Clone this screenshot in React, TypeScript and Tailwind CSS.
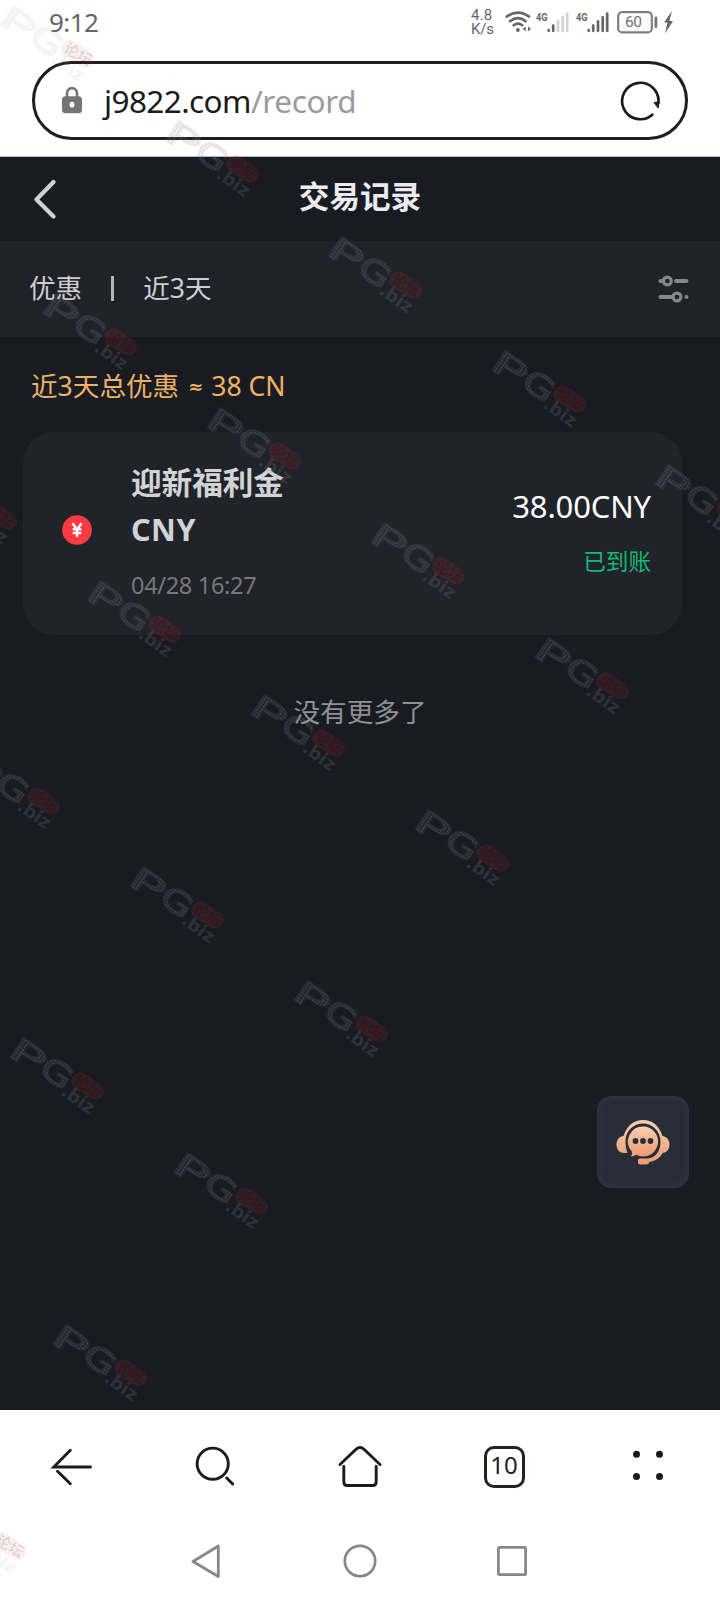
import React from "react";

const MARKS: [number, number][] = [
  [0, 5], [165, 120], [328, 236], [492, 350], [655, 464],
  [43, 293], [207, 407], [371, 522], [535, 637],
  [-77, 467], [87, 580], [251, 694], [415, 809],
  [-34, 752], [130, 866], [294, 980],
  [10, 1037], [174, 1152], [53, 1324], [-68, 1497],
];

function Watermarks() {
  return (
    <svg className="pointer-events-none absolute inset-0" width="720" height="1600" viewBox="0 0 720 1600">
      <defs>
        <pattern id="mesh" width="3" height="3" patternUnits="userSpaceOnUse">
          <rect width="3" height="3" fill="#7e838c" fillOpacity="0.08" />
          <rect width="2" height="2" fill="#9298a2" fillOpacity="0.11" />
        </pattern>
        <g id="mark">
          <g transform="translate(1 18) rotate(34)" fontFamily="DejaVu Sans" fontWeight="400">
            <text x="-4" y="2" fontSize="32" textLength="36" lengthAdjust="spacingAndGlyphs" fill="url(#mesh)" stroke="url(#mesh)" strokeWidth="2">P</text>
            <text x="32" y="0" fontSize="31" textLength="32" lengthAdjust="spacingAndGlyphs" fill="url(#mesh)" stroke="url(#mesh)" strokeWidth="2">G</text>
          </g>
          <g transform="translate(78 49) rotate(31)">
            <path d="M-9-9H-2Q1-9 3-8H9A8.500 8.500 0 0 1 9 9H-9A9 9 0 0 1-9-9z" fill="#e22832" fillOpacity="0.15" />
            <text x="0" y="5.500" textAnchor="middle" fontSize="15" fontFamily="Noto Sans CJK SC" fontWeight="500" fill="#15171e" fillOpacity="0.35">论坛</text>
          </g>
          <text transform="translate(50 57) rotate(35)" fontFamily="DejaVu Sans" fontWeight="700" fontSize="18" textLength="36" fill="#8d929b" fillOpacity="0.2">.biz</text>
        </g>
      </defs>
      {MARKS.map(([x, y]) => (
        <use key={`${x},${y}`} href="#mark" x={x} y={y} opacity={y < 100 || y > 1410 ? 0.45 : 1} />
      ))}
    </svg>
  );
}

function Signal({ weak }: { weak?: boolean }) {
  const off = weak ? "#d3d3d3" : "#666";
  return (
    <svg width="34" height="28" viewBox="0 -4 34 28">
      <text x="0" y="8.500" fontFamily="Roboto" fontWeight="700" fontSize="11.5" fill="#666" textLength="11.500" lengthAdjust="spacingAndGlyphs">4G</text>
      <g strokeWidth="2.700" strokeLinecap="round">
        <path d="M12.700 18.800v-.8M17.200 18.800v-5.300" stroke="#666" />
        <path d="M22 18.800V9.300M26.700 18.800V5.300M31.200 18.800V1.500" stroke={off} />
      </g>
    </svg>
  );
}

function StatusBar() {
  return (
    <div className="flex h-[44px] w-full items-start justify-between pl-[49px] pr-[46px] text-[#666]">
      <div className="pt-[9px] text-[26px] leading-[27px] tracking-[-0.6px]">9:12</div>
      <div className="flex items-start pt-[10px]">
        <div className="-mt-[2px] w-[34px] font-['Roboto'] text-[15px] leading-none">
          <div className="h-[14px] leading-[15px] tracking-[0.2px]">4.8</div>
          <div className="h-[14px] leading-[15px] tracking-[-0.2px]">K/s</div>
        </div>
        <svg width="31" height="24" viewBox="0 0 31 24" fill="none" stroke="#666" strokeWidth="2.6" strokeLinecap="round">
          <path d="M1.7 6.6Q13 -1.4 24 6.6M5 11.2Q13 5 20.7 11.2M8.7 15.3Q13 12 17.2 15.3" />
          <circle cx="12.9" cy="20" r="1.1" fill="#666" strokeWidth="1.6" />
          <path d="M20.7 16.500v5l-3-2.700zM23 16.500v5l3-2.700z" fill="#666" stroke="none" />
        </svg>
        <div className="flex w-[40px] -mt-[2px]"><Signal weak /></div>
        <div className="flex w-[41px] -mt-[2px]"><Signal /></div>
        <svg width="57" height="24" viewBox="0 0 57 24">
          <rect x="1.2" y="2.2" width="33.6" height="20.2" rx="4" fill="none" stroke="#808080" strokeWidth="2.2" />
          <rect x="37.5" y="6.5" width="2.8" height="11.5" rx="1.3" fill="#777" />
          <text x="8" y="17" fontFamily="Roboto" fontSize="15.5" fill="#707070" textLength="17">60</text>
          <path d="M55 1 47 12.5h3.5L48 23.5 56 11h-3.700z" fill="#666" />
        </svg>
      </div>
    </div>
  );
}

function AddressBar() {
  return (
    <div className="mx-8 mt-[17px] flex h-[79px] items-center rounded-full border-[3px] border-[#1f1f1f] pl-[27px] pr-[24px]">
      <svg width="20" height="27" viewBox="0 0 20 27">
        <path d="M5 11V6.200a5 5 0 0 1 10 0V11" fill="none" stroke="#757575" strokeWidth="2.600" />
        <rect y="9.300" width="20" height="17" rx="3.500" fill="#757575" />
        <ellipse cx="10" cy="17.700" rx="2.400" ry="2.900" fill="#fff" />
      </svg>
      <div className="ml-[22px] flex-1 whitespace-nowrap text-[31.500px] leading-none text-[#1b1b1b]">
        <span className="tracking-[-0.6px]">j9822.com</span>
        <span className="tracking-[-0.35px] text-[#9b9b9b]">/record</span>
      </div>
      <svg width="42" height="42" viewBox="0 0 42 42" fill="none" stroke="#1b1b1b" strokeWidth="2.700" strokeLinecap="round">
        <path d="M33.300 34.700A18.200 18.200 0 1 1 39.400 23" />
        <path d="m35.300 22.500 4.700-.8-.8 6z" fill="#1b1b1b" strokeWidth="1" strokeLinejoin="round" />
      </svg>
    </div>
  );
}

function RecordCard() {
  return (
    <div className="ml-[23px] flex h-[203px] w-[659px] rounded-[31px] bg-[#20232a] pl-[39px] pr-[31px]">
      <svg className="mt-[83px]" width="30" height="30" viewBox="0 0 30 30">
        <circle cx="15" cy="15" r="14.8" fill="#ff3a44" />
        <path d="m10.500 8.200 4.500 6.400 4.500-6.400M15 14.600v7.200M10.700 14.300h8.600M10.700 18h8.600" fill="none" stroke="#fff" strokeWidth="2.500" />
      </svg>
      <div className="ml-[39px] flex-1">
        <div className="mt-[27px] h-[47px] text-[30.600px] font-bold leading-[46px] text-[#d2d3d5]">迎新福利金</div>
        <div className="h-[46px] text-[30.500px] font-bold leading-[46px] tracking-[0.5px] text-[#d2d3d5]">CNY</div>
        <div className="mt-[15px] text-[23.500px] leading-[36px] tracking-[-0.3px] text-[#777879]">04/28 16:27</div>
      </div>
      <div className="text-right">
        <div className="mt-[52px] text-[31px] leading-[44px] tracking-[-0.15px] text-white">38.00CNY</div>
        <div className="mt-[17px] text-[22.600px] leading-[34px] text-[#14b877]">已到账</div>
      </div>
    </div>
  );
}

function SupportButton() {
  return (
    <button className="absolute left-[597px] top-[1096px] flex h-[92px] w-[92px] items-center justify-center rounded-[14px] border border-[#2f333e] bg-[#282d38] shadow-[inset_0_0_7px_#343945]">
      <svg width="54" height="45" viewBox="0 0 54 45">
        <defs>
          <linearGradient id="peach" x1="0" y1="0" x2="0" y2="1">
            <stop stopColor="#fbcfae" />
            <stop offset="1" stopColor="#e99b72" />
          </linearGradient>
        </defs>
        <path d="M7.500 16C11 5.500 18 0 27 0s16 5.500 19.500 16C50.500 16.500 53.500 20 53.500 24.500c0 5-3 8-7 8.500-2 4.500-7 8-13 9-.5 1.500-1.500 2.500-3.500 2.500h-6c-1.300 0-2-.7-2-2v-2c0-1.300.7-2 2-2h7c8 0 13.500-7 13.500-16.500C44.500 11 36.500 3.500 27 3.500S9.500 11 9.500 21c0 4 .5 8 2 12H8.500c-5 0-8-3.500-8-8.500S3.500 16.500 7.500 16z" fill="url(#peach)" />
        <path d="M27 6.500a15 15 0 1 1-7 28.200c-1.500 1.200-3 1.800-5 1.800 1-1.500 1.200-3 .8-5A15 15 0 0 1 27 6.500z" fill="url(#peach)" />
        <g fill="#292e39"><circle cx="19.500" cy="21" r="2.900" /><circle cx="27" cy="21" r="2.900" /><circle cx="34.500" cy="21" r="2.900" /></g>
      </svg>
    </button>
  );
}

function BrowserNav() {
  return (
    <div className="grid h-[111px] grid-cols-5 justify-items-center bg-white pt-[34px] text-[#1b1b1b]">
      <svg width="44" height="44" viewBox="0 0 44 44" fill="none" stroke="currentColor" strokeWidth="2.900" strokeLinecap="round">
        <path d="M40.500 23H3.800L20.300 6.300M7.500 27.300l12.800 12.500" />
      </svg>
      <svg width="44" height="44" viewBox="0 0 44 44" fill="none" stroke="currentColor" strokeWidth="2.900" strokeLinecap="round">
        <circle cx="18.700" cy="19.700" r="15.600" />
        <path d="m32.700 34 6 6" />
      </svg>
      <svg width="44" height="44" viewBox="0 0 44 44" fill="none" stroke="currentColor" strokeWidth="2.900" strokeLinecap="round">
        <path d="M2 20.500 18 5.300Q22 1.700 26 5.300L42 20.500" />
        <path d="M5.800 22.500v15.400Q5.800 41.500 9.300 41.500h25.400q3.500 0 3.500-3.600v-15.400" />
      </svg>
      <div className="mt-[2px] flex h-[42px] w-[41px] items-center justify-center rounded-[10px] border-[3px] border-[#222] pb-[4px] text-[24px] leading-none">10</div>
      <svg width="44" height="44" viewBox="0 0 44 44" fill="currentColor">
        <circle cx="10.500" cy="10.300" r="3.500" /><circle cx="33.500" cy="10.300" r="3.500" />
        <circle cx="10.500" cy="32.500" r="3.500" /><circle cx="33.500" cy="32.500" r="3.500" />
      </svg>
    </div>
  );
}

function SystemNav() {
  return (
    <div className="flex h-[79px] items-start bg-white pl-[189px] pt-[21px]">
      <svg width="34" height="38" viewBox="0 0 34 38" fill="none" stroke="#888" strokeWidth="2.800" strokeLinejoin="round">
        <path d="M29.300 4v30.500L4 19.500z" />
      </svg>
      <svg className="ml-[118px]" width="38" height="38" viewBox="0 0 38 38" fill="none" stroke="#888" strokeWidth="2.700">
        <circle cx="19" cy="19" r="15.200" />
      </svg>
      <svg className="ml-[114px]" width="38" height="38" viewBox="0 0 38 38" fill="none" stroke="#888" strokeWidth="2.800">
        <rect x="5.400" y="5.400" width="27.200" height="27.200" rx="1.200" />
      </svg>
    </div>
  );
}

export default function App() {
  return (
    <div className="relative flex h-[1600px] w-[720px] flex-col overflow-hidden bg-white font-['Noto_Sans','Noto_Sans_CJK_SC',sans-serif]">
      <div className="h-[157px] shrink-0 border-b border-[#b6b8bc]">
        <StatusBar />
        <AddressBar />
      </div>
      <main className="flex h-[1253px] flex-col bg-[#181b22]">
        <header className="flex h-[84px] shrink-0 items-center pl-[33px]">
          <svg width="24" height="40" viewBox="0 0 24 40" fill="none" stroke="#d0d1d3" strokeWidth="4.200" strokeLinecap="round" strokeLinejoin="round">
            <path d="M20.500 3 3.500 20.500 20.500 37.500" />
          </svg>
          <h1 className="mr-[57px] flex-1 pb-[6px] text-center text-[30.600px] font-bold leading-[46px] text-[#ececee]">交易记录</h1>
        </header>
        <div className="flex h-[96px] shrink-0 items-center bg-[#1f2229] pb-[2px] pl-[29px] pr-[31px] text-[26.600px] text-[#cdced0]">
          <span className="leading-[40px]">优惠</span>
          <span className="ml-[29px] h-[25px] w-[3px] bg-[#b4b5b8]" />
          <span className="ml-[29px] leading-[40px]">近3天</span>
          <svg className="ml-auto mt-px" width="31" height="28" viewBox="0 0 31 28" fill="none" stroke="#85868a" strokeWidth="3.800" strokeLinecap="round">
            <path d="M2.400 6h3M18 6h10.500M2.400 22h12M28.400 22h.2" />
            <circle cx="9.300" cy="6" r="3.900" strokeWidth="3.200" />
            <circle cx="19" cy="22" r="3.900" strokeWidth="3.200" />
          </svg>
        </div>
        <div className="flex h-[95px] shrink-0 pl-[31px] pt-[29px] text-[26.600px] leading-[40px] text-[#edb264]">
          <span>近3天总优惠</span>
          <span className="ml-[9px] w-[15px] pt-px font-['DejaVu_Sans'] text-[18px] font-bold">≈</span>
          <span className="ml-[8px] text-[26.600px]">38 CN</span>
        </div>
        <RecordCard />
        <div className="mt-[57px] text-center text-[26.600px] leading-[40px] text-[#8e9093]">没有更多了</div>
      </main>
      <BrowserNav />
      <SystemNav />
      <SupportButton />
      <Watermarks />
    </div>
  );
}
